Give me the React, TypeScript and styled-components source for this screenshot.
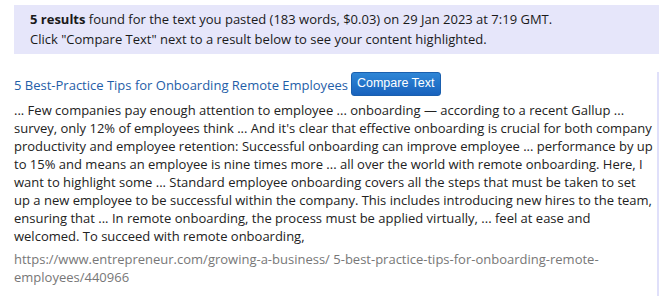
import styled, { createGlobalStyle } from 'styled-components';

const GlobalStyle = createGlobalStyle`
    body {
        margin: 0;
        background: #fff;
        font-family: "Open Sans", "Liberation Sans", sans-serif;
        color: #222;
    }
`

const Page = styled.div`
    padding: 5px 0 0 14px;
    overflow: hidden;
`

const Summary = styled.div`
    background-color: #e6e6fa;
    padding: 4px 16px 5px;
    font-size: 13px;
    line-height: 20px;
    color: #1a1a1a;
`

const ResultBlock = styled.div`
    margin-top: 18px;
    padding: 0 3px 10px 0;
    border-right: 2px solid #e0e0fa;
`

const TitleRow = styled.div`
    display: flex;
    align-items: center;
    gap: 3px;
    font-size: 13px;
    line-height: 22px;
`

const TitleLink = styled.a`
    color: #1f5ea8;
    text-decoration: none;
    padding-top: 1px;
`

const CompareButton = styled.button`
    font-family: "Liberation Sans", Arial, sans-serif;
    font-size: 12.5px;
    color: #fff;
    padding: 3px 5px 4px;
    border: 1px solid #1a5fae;
    border-radius: 3px;
    background: linear-gradient(#2f86d6, #1862bd);
    line-height: 15px;
    cursor: pointer;
`

const Excerpt = styled.p`
    margin: 5px 0 0;
    font-size: 13px;
    line-height: 18px;
    color: #222;
`

const SourceUrl = styled.div`
    margin-top: 5px;
    font-size: 13px;
    line-height: 18px;
    color: #777;
`

export default function App() {
    return (
        <Page>
            <GlobalStyle />
            <Summary>
                <b>5 results</b> found for the text you pasted (183 words, $0.03) on 29 Jan 2023 at 7:19 GMT.
                <br />
                Click "Compare Text" next to a result below to see your content highlighted.
            </Summary>
            <ResultBlock>
                <TitleRow>
                    <TitleLink href="#">5 Best-Practice Tips for Onboarding Remote Employees</TitleLink>
                    <CompareButton>Compare Text</CompareButton>
                </TitleRow>
                <Excerpt>
                    ... Few companies pay enough attention to employee ... onboarding — according to a recent Gallup ... survey, only 12% of employees think ... And it's clear that effective onboarding is crucial for both company productivity and employee retention: Successful onboarding can improve employee ... performance by up to 15% and means an employee is nine times more ... all over the world with remote onboarding. Here, I want to highlight some ... Standard employee onboarding covers all the steps that must be taken to set up a new employee to be successful within the company. This includes introducing new hires to the team, ensuring that ... In remote onboarding, the process must be applied virtually, ... feel at ease and welcomed. To succeed with remote onboarding,
                </Excerpt>
                <SourceUrl>https://www.entrepreneur.com/growing-a-business/ 5-best-practice-tips-for-onboarding-remote-employees/440966</SourceUrl>
            </ResultBlock>
        </Page>
    );
}
